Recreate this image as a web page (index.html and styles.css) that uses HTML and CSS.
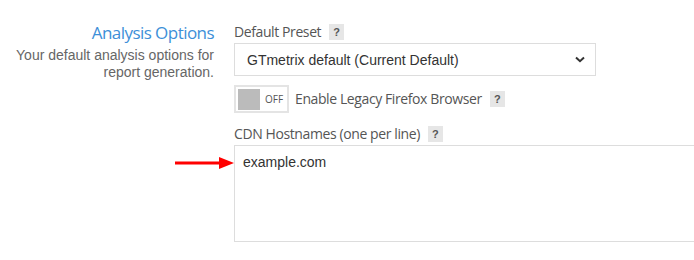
FILE: index.html
```html
<!DOCTYPE html>
<html lang="en">
<head>
    <meta charset="UTF-8">
    <title>Analysis Options</title>
    <link rel="stylesheet" href="styles.css">
</head>
<body>
    <div class="settings-row">
        <div class="settings-intro">
            <h3 class="settings-title">Analysis Options</h3>
            <p class="settings-desc">Your default analysis options for report generation.</p>
        </div>

        <div class="settings-fields">
            <div class="field">
                <label class="field-label">Default Preset <span class="help">?</span></label>
                <div class="select-box">
                    <span>GTmetrix default (Current Default)</span>
                    <svg class="chevron" width="10" height="7" viewBox="0 0 10 7">
                        <path d="M1 1.5 L5 5.2 L9 1.5" fill="none" stroke="#333" stroke-width="2"/>
                    </svg>
                </div>
            </div>

            <div class="field toggle-field">
                <div class="toggle">
                    <span class="toggle-knob"></span>
                    <span class="toggle-text">OFF</span>
                </div>
                <label class="field-label">Enable Legacy Firefox Browser <span class="help">?</span></label>
            </div>

            <div class="field">
                <label class="field-label">CDN Hostnames (one per line) <span class="help">?</span></label>
                <div class="textarea-wrap">
                    <!-- flecha de anotación -->
                    <svg class="pointer" width="60" height="14" viewBox="0 0 60 14">
                        <line x1="0" y1="7" x2="46" y2="7" stroke="#f00" stroke-width="3"/>
                        <polygon points="44,1 59,7 44,13" fill="#f00"/>
                    </svg>
                    <div class="textarea">example.com</div>
                </div>
            </div>
        </div>
    </div>
</body>
</html>
```

FILE: styles.css
```css
/* Contenedor principal */
body {
    margin: 0;
    background: #fff;
    font-family: 'Liberation Sans', Arial, sans-serif;
    overflow: hidden;
}

.settings-row {
    display: flex;
    gap: 20px;
    padding-top: 22px;
}

/* Columna izquierda */
.settings-intro {
    width: 214px;
    flex-shrink: 0;
    text-align: right;
}

.settings-title {
    margin: 0;
    font-family: 'Open Sans', sans-serif;
    font-weight: 400;
    font-size: 17px;
    line-height: 22px;
    color: #3d8fd8;
    letter-spacing: -0.55px;
}

.settings-desc {
    margin: 3px 0 0 0;
    font-size: 14px;
    line-height: 17px;
    color: #666;
}

/* Columna derecha */
.settings-fields {
    display: flex;
    flex-direction: column;
    width: 480px;
    flex-shrink: 0;
}

.field-label {
    display: flex;
    align-items: center;
    gap: 8px;
    font-family: 'Open Sans', sans-serif;
    font-size: 14px;
    line-height: 20px;
    color: #555;
    letter-spacing: -0.4px;
}

.help {
    display: inline-flex;
    justify-content: center;
    align-items: center;
    width: 15px;
    height: 16px;
    background: #e6e6e6;
    color: #555;
    font-family: 'Liberation Sans', Arial, sans-serif;
    font-weight: bold;
    font-size: 11px;
    letter-spacing: 0;
}

.select-box {
    display: flex;
    align-items: center;
    justify-content: space-between;
    width: 362px;
    height: 33px;
    box-sizing: border-box;
    margin-top: 1px;
    padding: 0 10px 0 12px;
    border: 1px solid #ddd;
    font-size: 14px;
    color: #333;
}

.toggle-field {
    display: flex;
    align-items: center;
    gap: 6px;
    margin-top: 9px;
}

.toggle {
    display: flex;
    align-items: center;
    gap: 5px;
    width: 55px;
    height: 28px;
    box-sizing: border-box;
    padding: 2px;
    border: 2px solid #e4e4e4;
}

.toggle-knob {
    width: 22px;
    height: 21px;
    background: #bbb;
}

.toggle-text {
    font-family: 'Open Sans', sans-serif;
    font-size: 10px;
    color: #555;
}

.toggle-field + .field {
    margin-top: 11px;
}

.textarea-wrap {
    position: relative;
    margin-top: 1px;
}

.textarea {
    height: 97px;
    box-sizing: border-box;
    padding: 8px 8px;
    border: 1px solid #ddd;
    font-size: 14px;
    color: #333;
}

.pointer {
    position: absolute;
    left: -59px;
    top: 11px;
}
```
